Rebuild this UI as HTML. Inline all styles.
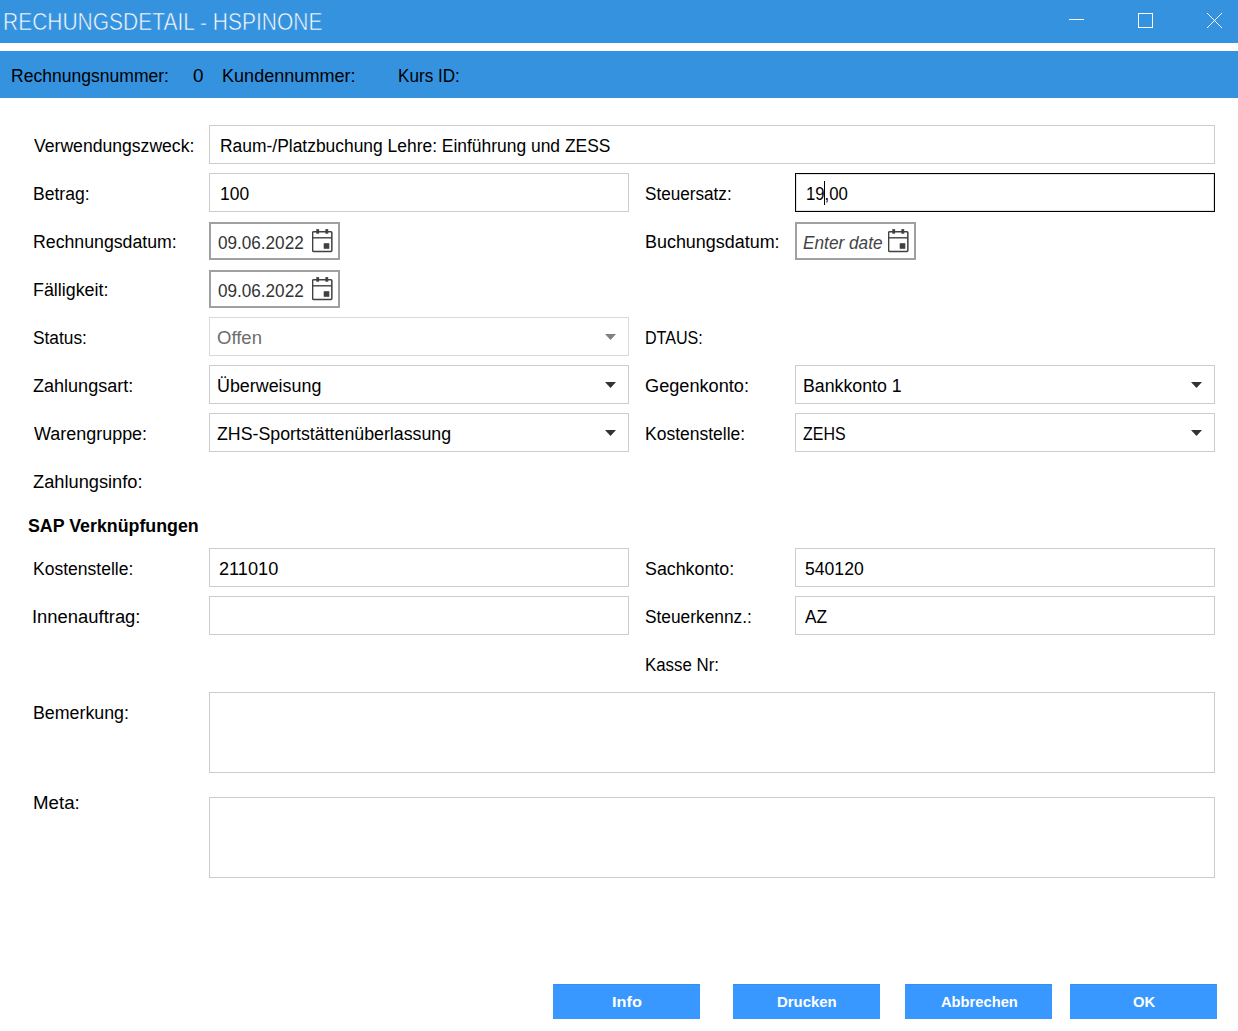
<!DOCTYPE html>
<html><head><meta charset="utf-8"><style>
html,body{margin:0;padding:0;width:1238px;height:1031px;overflow:hidden;background:#fff;}
.b{position:absolute;box-sizing:border-box;}
.t{position:absolute;white-space:nowrap;transform-origin:0 0;font-family:"Liberation Sans", sans-serif;}
</style></head><body>
<div class='b' style='left:0;top:0;width:1238px;height:43px;background:#3492de'></div><div class='b' style='left:0;top:51px;width:1238px;height:47px;background:#3492de'></div><svg class='b' style='left:1060px;top:5px' width='170' height='30' viewBox='1060 5 170 30'><line x1='1069' y1='19.5' x2='1084' y2='19.5' stroke='#fff' stroke-width='1'/><rect x='1138.5' y='13.5' width='14' height='14' fill='none' stroke='#fff' stroke-width='1'/><line x1='1207' y1='13' x2='1222' y2='28' stroke='#fff' stroke-width='1'/><line x1='1222' y1='13' x2='1207' y2='28' stroke='#fff' stroke-width='1'/></svg><div class='b' style='left:209px;top:125px;width:1006px;height:39px;border:1px solid #cccccc;background:#fff;'></div><div class='b' style='left:209px;top:173px;width:420px;height:39px;border:1px solid #cccccc;background:#fff;'></div><div class='b' style='left:795px;top:173px;width:420px;height:39px;border:1px solid #000;background:#fff;box-shadow:inset 0 0 0 1px #e2e2e2;'></div><div class='b' style='left:209px;top:222px;width:131px;height:38px;border:2px solid #a0a0a0;background:#fff;'></div><svg class='b' style='left:311.80px;top:229px' width='22' height='24' viewBox='0 0 22 24'><g fill='none' stroke='#404040'><rect x='0.6' y='2.85' width='19.25' height='19.6' rx='1' stroke-width='1.5'/><line x1='0.75' y1='8.8' x2='19.85' y2='8.8' stroke-width='1.4'/></g><g fill='#404040'><rect x='4.3' y='0.1' width='2.8' height='4.6'/><rect x='13.4' y='0.1' width='2.8' height='4.6'/><rect x='11.7' y='14.2' width='5.6' height='5.6'/></g></svg><div class='b' style='left:795px;top:222px;width:121px;height:38px;border:2px solid #a0a0a0;background:#fff;'></div><svg class='b' style='left:887.80px;top:229px' width='22' height='24' viewBox='0 0 22 24'><g fill='none' stroke='#404040'><rect x='0.6' y='2.85' width='19.25' height='19.6' rx='1' stroke-width='1.5'/><line x1='0.75' y1='8.8' x2='19.85' y2='8.8' stroke-width='1.4'/></g><g fill='#404040'><rect x='4.3' y='0.1' width='2.8' height='4.6'/><rect x='13.4' y='0.1' width='2.8' height='4.6'/><rect x='11.7' y='14.2' width='5.6' height='5.6'/></g></svg><div class='b' style='left:209px;top:270px;width:131px;height:38px;border:2px solid #a0a0a0;background:#fff;'></div><svg class='b' style='left:311.80px;top:277px' width='22' height='24' viewBox='0 0 22 24'><g fill='none' stroke='#404040'><rect x='0.6' y='2.85' width='19.25' height='19.6' rx='1' stroke-width='1.5'/><line x1='0.75' y1='8.8' x2='19.85' y2='8.8' stroke-width='1.4'/></g><g fill='#404040'><rect x='4.3' y='0.1' width='2.8' height='4.6'/><rect x='13.4' y='0.1' width='2.8' height='4.6'/><rect x='11.7' y='14.2' width='5.6' height='5.6'/></g></svg><div class='b' style='left:209px;top:317px;width:420px;height:39px;border:1px solid #d9d9d9;background:#fff;'></div><svg class='b' style='left:605px;top:334px' width='11' height='6' viewBox='0 0 11 6'><path d='M0 0H11L5.5 6Z' fill='#808080'/></svg><div class='b' style='left:209px;top:365px;width:420px;height:39px;border:1px solid #cccccc;background:#fff;'></div><svg class='b' style='left:605px;top:382px' width='11' height='6' viewBox='0 0 11 6'><path d='M0 0H11L5.5 6Z' fill='#333'/></svg><div class='b' style='left:795px;top:365px;width:420px;height:39px;border:1px solid #cccccc;background:#fff;'></div><svg class='b' style='left:1191px;top:382px' width='11' height='6' viewBox='0 0 11 6'><path d='M0 0H11L5.5 6Z' fill='#333'/></svg><div class='b' style='left:209px;top:413px;width:420px;height:39px;border:1px solid #cccccc;background:#fff;'></div><svg class='b' style='left:605px;top:430px' width='11' height='6' viewBox='0 0 11 6'><path d='M0 0H11L5.5 6Z' fill='#333'/></svg><div class='b' style='left:795px;top:413px;width:420px;height:39px;border:1px solid #cccccc;background:#fff;'></div><svg class='b' style='left:1191px;top:430px' width='11' height='6' viewBox='0 0 11 6'><path d='M0 0H11L5.5 6Z' fill='#333'/></svg><div class='b' style='left:209px;top:548px;width:420px;height:39px;border:1px solid #cccccc;background:#fff;'></div><div class='b' style='left:795px;top:548px;width:420px;height:39px;border:1px solid #cccccc;background:#fff;'></div><div class='b' style='left:209px;top:596px;width:420px;height:39px;border:1px solid #cccccc;background:#fff;'></div><div class='b' style='left:795px;top:596px;width:420px;height:39px;border:1px solid #cccccc;background:#fff;'></div><div class='b' style='left:209px;top:692px;width:1006px;height:81px;border:1px solid #cccccc;background:#fff;'></div><div class='b' style='left:209px;top:797px;width:1006px;height:81px;border:1px solid #cccccc;background:#fff;'></div><div class='b' style='left:553px;top:984px;width:147px;height:35px;border:1px solid #3898ff;background:#3898ff;border-top-color:#2d90ff;'></div><div class='b' style='left:733px;top:984px;width:147px;height:35px;border:1px solid #3898ff;background:#3898ff;border-top-color:#2d90ff;'></div><div class='b' style='left:905px;top:984px;width:147px;height:35px;border:1px solid #3898ff;background:#3898ff;border-top-color:#2d90ff;'></div><div class='b' style='left:1070px;top:984px;width:147px;height:35px;border:1px solid #3898ff;background:#3898ff;border-top-color:#2d90ff;'></div><div class='b' style='left:824px;top:181px;width:1px;height:24px;background:#000'></div>
<div class='t' style='left:3.20px;top:9.00px;font-size:23.3px;line-height:27px;font-weight:400;font-style:normal;color:#fff;transform:scaleX(0.9006);-webkit-text-stroke:0.6px #3492de;'>RECHUNGSDETAIL - HSPINONE</div><div class='t' style='left:11.03px;top:66.00px;font-size:18px;line-height:21px;font-weight:400;font-style:normal;color:#000;transform:scaleX(0.9748);'>Rechnungsnummer:</div><div class='t' style='left:192.55px;top:66.00px;font-size:18px;line-height:21px;font-weight:400;font-style:normal;color:#000;transform:scaleX(1.0500);'>0</div><div class='t' style='left:222.00px;top:66.00px;font-size:18px;line-height:21px;font-weight:400;font-style:normal;color:#000;transform:scaleX(1.0038);'>Kundennummer:</div><div class='t' style='left:398.05px;top:66.00px;font-size:18px;line-height:21px;font-weight:400;font-style:normal;color:#000;transform:scaleX(0.9516);'>Kurs ID:</div><div class='t' style='left:33.60px;top:136.00px;font-size:18px;line-height:21px;font-weight:400;font-style:normal;color:#000;transform:scaleX(0.9772);'>Verwendungszweck:</div><div class='t' style='left:33.43px;top:184.00px;font-size:18px;line-height:21px;font-weight:400;font-style:normal;color:#000;transform:scaleX(0.9745);'>Betrag:</div><div class='t' style='left:32.82px;top:232.00px;font-size:18px;line-height:21px;font-weight:400;font-style:normal;color:#000;transform:scaleX(0.9839);'>Rechnungsdatum:</div><div class='t' style='left:33.01px;top:280.00px;font-size:18px;line-height:21px;font-weight:400;font-style:normal;color:#000;transform:scaleX(0.9918);'>Fälligkeit:</div><div class='t' style='left:32.64px;top:328.00px;font-size:18px;line-height:21px;font-weight:400;font-style:normal;color:#000;transform:scaleX(0.9623);'>Status:</div><div class='t' style='left:32.60px;top:376.00px;font-size:18px;line-height:21px;font-weight:400;font-style:normal;color:#000;transform:scaleX(1.0021);'>Zahlungsart:</div><div class='t' style='left:33.60px;top:424.00px;font-size:18px;line-height:21px;font-weight:400;font-style:normal;color:#000;transform:scaleX(0.9973);'>Warengruppe:</div><div class='t' style='left:32.59px;top:472.00px;font-size:18px;line-height:21px;font-weight:400;font-style:normal;color:#000;transform:scaleX(1.0133);'>Zahlungsinfo:</div><div class='t' style='left:27.71px;top:516.00px;font-size:18px;line-height:21px;font-weight:700;font-style:normal;color:#000;transform:scaleX(0.9883);'>SAP Verknüpfungen</div><div class='t' style='left:33.03px;top:559.00px;font-size:18px;line-height:21px;font-weight:400;font-style:normal;color:#000;transform:scaleX(0.9730);'>Kostenstelle:</div><div class='t' style='left:31.95px;top:607.00px;font-size:18px;line-height:21px;font-weight:400;font-style:normal;color:#000;transform:scaleX(1.0225);'>Innenauftrag:</div><div class='t' style='left:33.41px;top:703.00px;font-size:18px;line-height:21px;font-weight:400;font-style:normal;color:#000;transform:scaleX(0.9883);'>Bemerkung:</div><div class='t' style='left:32.96px;top:793.00px;font-size:18px;line-height:21px;font-weight:400;font-style:normal;color:#000;transform:scaleX(1.0381);'>Meta:</div><div class='t' style='left:644.85px;top:184.00px;font-size:18px;line-height:21px;font-weight:400;font-style:normal;color:#000;transform:scaleX(0.9523);'>Steuersatz:</div><div class='t' style='left:645.30px;top:232.00px;font-size:18px;line-height:21px;font-weight:400;font-style:normal;color:#000;transform:scaleX(0.9962);'>Buchungsdatum:</div><div class='t' style='left:645.41px;top:328.00px;font-size:18px;line-height:21px;font-weight:400;font-style:normal;color:#000;transform:scaleX(0.8935);'>DTAUS:</div><div class='t' style='left:644.79px;top:376.00px;font-size:18px;line-height:21px;font-weight:400;font-style:normal;color:#000;transform:scaleX(1.0090);'>Gegenkonto:</div><div class='t' style='left:645.33px;top:424.00px;font-size:18px;line-height:21px;font-weight:400;font-style:normal;color:#000;transform:scaleX(0.9720);'>Kostenstelle:</div><div class='t' style='left:644.81px;top:559.00px;font-size:18px;line-height:21px;font-weight:400;font-style:normal;color:#000;transform:scaleX(0.9897);'>Sachkonto:</div><div class='t' style='left:644.84px;top:607.00px;font-size:18px;line-height:21px;font-weight:400;font-style:normal;color:#000;transform:scaleX(0.9620);'>Steuerkennz.:</div><div class='t' style='left:645.36px;top:655.00px;font-size:18px;line-height:21px;font-weight:400;font-style:normal;color:#000;transform:scaleX(0.9355);'>Kasse Nr:</div><div class='t' style='left:220.03px;top:136.00px;font-size:18px;line-height:21px;font-weight:400;font-style:normal;color:#000;transform:scaleX(0.9682);'>Raum-/Platzbuchung Lehre: Einführung und ZESS</div><div class='t' style='left:219.73px;top:184.00px;font-size:18px;line-height:21px;font-weight:400;font-style:normal;color:#000;transform:scaleX(0.9679);'>100</div><div class='t' style='left:806.07px;top:184.00px;font-size:18px;line-height:21px;font-weight:400;font-style:normal;color:#000;transform:scaleX(0.9302);'>19,00</div><div class='t' style='left:217.65px;top:233.00px;font-size:18px;line-height:21px;font-weight:400;font-style:normal;color:#333;transform:scaleX(0.9511);'>09.06.2022</div><div class='t' style='left:217.65px;top:281.00px;font-size:18px;line-height:21px;font-weight:400;font-style:normal;color:#333;transform:scaleX(0.9511);'>09.06.2022</div><div class='t' style='left:802.64px;top:233.00px;font-size:18px;line-height:21px;font-weight:400;font-style:italic;color:#444;transform:scaleX(0.9580);'>Enter date</div><div class='t' style='left:217.37px;top:328.00px;font-size:18px;line-height:21px;font-weight:400;font-style:normal;color:#6d6d6d;transform:scaleX(1.0286);'>Offen</div><div class='t' style='left:217.41px;top:376.00px;font-size:18px;line-height:21px;font-weight:400;font-style:normal;color:#000;transform:scaleX(0.9932);'>Überweisung</div><div class='t' style='left:217.41px;top:424.00px;font-size:18px;line-height:21px;font-weight:400;font-style:normal;color:#000;transform:scaleX(0.9872);'>ZHS-Sportstättenüberlassung</div><div class='t' style='left:803.31px;top:376.00px;font-size:18px;line-height:21px;font-weight:400;font-style:normal;color:#000;transform:scaleX(0.9867);'>Bankkonto 1</div><div class='t' style='left:803.11px;top:424.00px;font-size:18px;line-height:21px;font-weight:400;font-style:normal;color:#000;transform:scaleX(0.8870);'>ZEHS</div><div class='t' style='left:218.69px;top:559.00px;font-size:18px;line-height:21px;font-weight:400;font-style:normal;color:#000;transform:scaleX(1.0088);'>211010</div><div class='t' style='left:805.12px;top:559.00px;font-size:18px;line-height:21px;font-weight:400;font-style:normal;color:#000;transform:scaleX(0.9776);'>540120</div><div class='t' style='left:805.20px;top:607.00px;font-size:18px;line-height:21px;font-weight:400;font-style:normal;color:#000;transform:scaleX(0.9609);'>AZ</div><div class='t' style='left:611.72px;top:993.00px;font-size:15px;line-height:17px;font-weight:700;font-style:normal;color:#fff;transform:scaleX(1.0846);'>Info</div><div class='t' style='left:776.61px;top:993.00px;font-size:15px;line-height:17px;font-weight:700;font-style:normal;color:#fff;transform:scaleX(0.9948);'>Drucken</div><div class='t' style='left:940.52px;top:993.00px;font-size:15px;line-height:17px;font-weight:700;font-style:normal;color:#fff;transform:scaleX(0.9805);'>Abbrechen</div><div class='t' style='left:1132.81px;top:993.00px;font-size:15px;line-height:17px;font-weight:700;font-style:normal;color:#fff;transform:scaleX(0.9857);'>OK</div>
</body></html>
